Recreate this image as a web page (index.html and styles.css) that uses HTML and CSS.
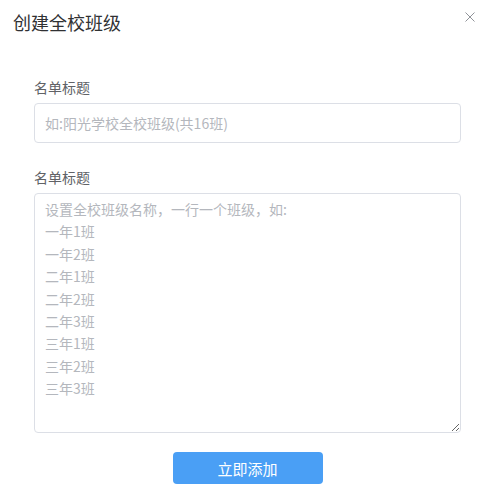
FILE: index.html
```html
<!DOCTYPE html>
<html>

<head>
    <meta charset="utf-8">
    <title>创建全校班级</title>
    <meta name="viewport" content="width=device-width, initial-scale=1">
    <link rel="stylesheet" href="styles.css">
</head>

<body>
    <section class="dialog">
        <header class="dialog-header">
            <span class="dialog-title">创建全校班级</span>
            <button class="dialog-close" aria-label="关闭">
                <svg width="10" height="10" viewBox="0 0 10 10">
                    <path d="M0.5 0.5L9.5 9.5M9.5 0.5L0.5 9.5" stroke="#909399" stroke-width="1" fill="none"/>
                </svg>
            </button>
        </header>
        <form class="dialog-body">
            <div class="form-item">
                <label class="form-label">名单标题</label>
                <input class="form-input" type="text" placeholder="如:阳光学校全校班级(共16班)">
            </div>
            <div class="form-item form-item-last">
                <label class="form-label">名单标题</label>
                <textarea class="form-textarea" placeholder="设置全校班级名称，一行一个班级，如:
一年1班
一年2班
二年1班
二年2班
二年3班
三年1班
三年2班
三年3班"></textarea>
            </div>
            <div class="form-actions">
                <button class="btn-primary" type="button">立即添加</button>
            </div>
        </form>
    </section>
</body>

</html>
```

FILE: styles.css
```css
* {
    box-sizing: border-box;
}

body {
    margin: 0;
    background-color: #fff;
    font-family: "Noto Sans CJK SC", "Noto Sans", sans-serif;
}

.dialog {
    width: 490px;
    height: 497px;
    padding: 9px 13px 0 13px;
}

.dialog-header {
    display: flex;
    justify-content: space-between;
    align-items: flex-start;
    height: 68px;
}

.dialog-title {
    font-size: 18px;
    line-height: 26px;
    color: #303133;
}

.dialog-close {
    margin: 1px 2px 0 0;
    padding: 0;
    border: none;
    background: none;
    width: 10px;
    height: 10px;
    cursor: pointer;
}

.dialog-body {
    display: flex;
    flex-direction: column;
    padding: 0 16px 0 21px;
}

.form-item {
    display: flex;
    flex-direction: column;
    margin-bottom: 24px;
}

.form-item-last {
    margin-bottom: 19px;
}

.form-label {
    font-size: 14px;
    line-height: 20px;
    color: #606266;
    margin-bottom: 6px;
}

.form-input,
.form-textarea {
    width: 100%;
    border: 1px solid #dcdfe6;
    border-radius: 4px;
    font-family: inherit;
    font-size: 14px;
    color: #606266;
    outline: none;
}

.form-input {
    height: 40px;
    padding: 0 10px;
}

.form-textarea {
    height: 240px;
    padding: 4px 10px;
    line-height: 22.4px;
    resize: vertical;
}

.form-input::placeholder,
.form-textarea::placeholder {
    color: #b4b7bd;
}

.form-actions {
    display: flex;
    justify-content: center;
}

.btn-primary {
    width: 150px;
    height: 32px;
    border: none;
    border-radius: 4px;
    background-color: #4a9ff5;
    color: #fff;
    font-family: inherit;
    font-size: 15px;
    cursor: pointer;
}
```
